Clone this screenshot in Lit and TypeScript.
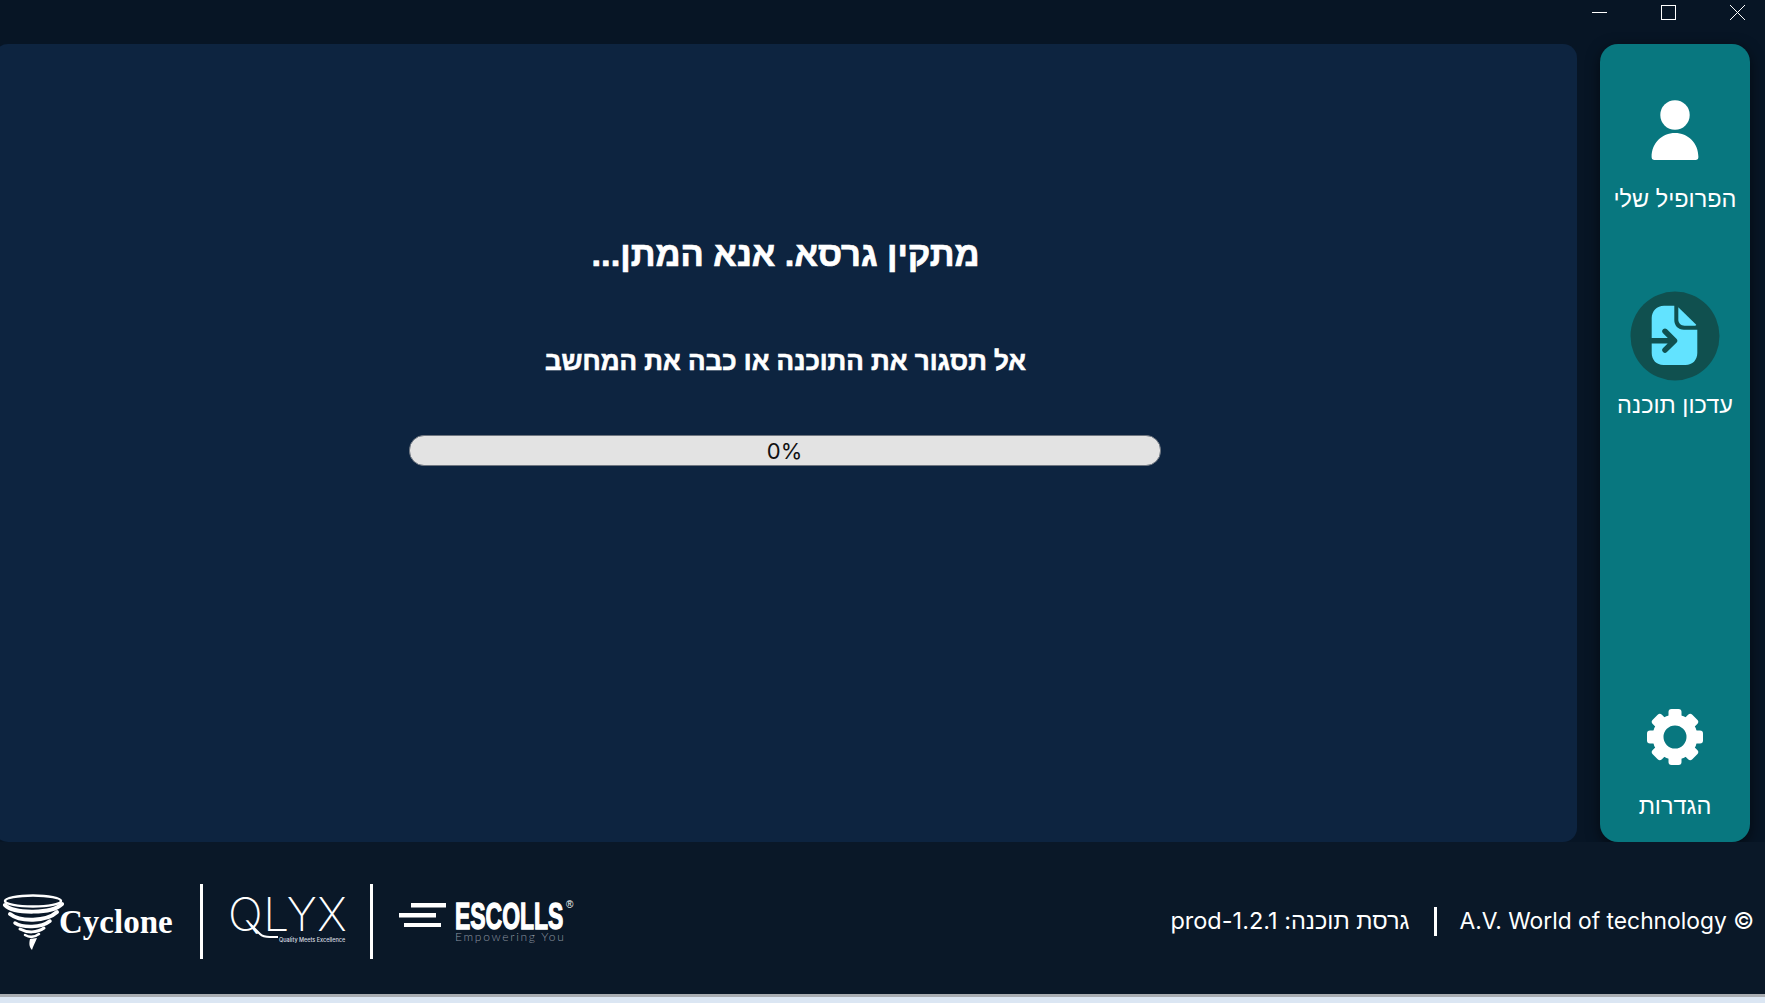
import { LitElement, html, css, svg } from 'lit';
import { customElement } from 'lit/decorators.js';

const gearTeeth = [0, 45, 90, 135, 180, 225, 270, 315];

@customElement('app-root')
export class AppRoot extends LitElement {
  static styles = css`
    :host {
      display: block;
      width: 100%;
      height: 1003px;
      overflow: hidden;
      background: #071525;
      color: #fff;
      font-family: Inter, "Liberation Sans", "DejaVu Sans", sans-serif;
    }

    .shell {
      display: flex;
      flex-direction: column;
      height: 1003px;
    }

    .titlebar {
      height: 44px;
      flex: none;
      display: flex;
      justify-content: flex-end;
      align-items: flex-start;
      gap: 54px;
      padding: 5px 20px 0 0;
      box-sizing: border-box;
    }

    .titlebar svg {
      display: block;
    }

    .body {
      flex: none;
      height: 798px;
      display: flex;
      gap: 23px;
      margin-left: -6px;
      padding-right: 15px;
    }

    .panel {
      flex: 1;
      background: #0d2440;
      border-radius: 14px;
      display: flex;
      flex-direction: column;
      align-items: center;
      padding-top: 189px;
      box-sizing: border-box;
    }

    .panel h1 {
      margin: 0;
      font: 700 34.500px/42px "Liberation Sans", sans-serif;
      -webkit-text-stroke: 0.7px #fff;
    }

    .panel h2 {
      margin: 69px 0 0;
      font: 700 26px/34px "Liberation Sans", sans-serif;
      -webkit-text-stroke: 0.6px #fff;
    }

    .bar {
      margin: 57px 2px 0 0;
      width: 752px;
      height: 31px;
      box-sizing: border-box;
      border: 1px solid #6f7680;
      border-radius: 15px;
      background: #e3e3e3;
      color: #111;
      text-align: center;
      font: 400 22px/30px Inter, "Liberation Sans", sans-serif;
    }

    .sidebar {
      flex: none;
      width: 150px;
      background: #08777f;
      border-radius: 18px;
      box-shadow: 0 4px 14px rgba(0, 0, 0, 0.55);
      display: flex;
      flex-direction: column;
      align-items: center;
      box-sizing: border-box;
      padding: 56px 0 21px;
    }

    .item {
      display: flex;
      flex-direction: column;
      align-items: center;
      font: 400 23.500px/30px "Liberation Sans", sans-serif;
    }

    .item svg {
      display: block;
    }

    .item.profile span {
      margin-top: 24px;
    }

    .item.update {
      margin-top: 77px;
    }

    .item.update span {
      margin-top: 9px;
    }

    .item.settings {
      margin-top: auto;
    }

    .item.settings span {
      margin-top: 26px;
    }

    .footer {
      flex: none;
      height: 152px;
      background: #0a1828;
      display: flex;
      align-items: flex-start;
      justify-content: space-between;
      padding: 42px 11px 0 2px;
      box-sizing: border-box;
    }

    .logos {
      display: flex;
      align-items: flex-start;
    }

    .divider {
      width: 3px;
      height: 75px;
      background: #fff;
    }

    .cyclone {
      display: flex;
      align-items: flex-start;
      width: 198px;
      padding-top: 9px;
      box-sizing: border-box;
    }

    .cyclone span {
      font: 700 33px/48px "Liberation Serif", serif;
      margin-top: 5px;
      margin-left: -5px;
    }

    .qlyx {
      position: relative;
      width: 167px;
      padding: 8px 0 0 25px;
      box-sizing: border-box;
      display: flex;
      flex-direction: column;
    }

    .qlyx b {
      font: 200 46px/44px Inter, sans-serif;
      letter-spacing: 0.5px;
    }

    .qlyx small {
      font: 500 5.500px/8px Inter, sans-serif;
      color: #d8dde2;
      margin: 0 0 0 51px;
      white-space: nowrap;
    }

    .qlyx svg {
      position: absolute;
      left: 45px;
      top: 38px;
    }

    .escolls {
      display: flex;
      align-items: flex-start;
      padding: 19px 0 0 26px;
    }

    .escolls svg {
      display: block;
      margin-right: 9px;
    }

    .escolls .words {
      display: flex;
      flex-direction: column;
      margin-top: -5px;
    }

    .escolls .name {
      display: flex;
      align-items: flex-start;
      height: 32px;
    }

    .escolls b {
      display: block;
      width: 110px;
      font: 700 37px/38px "Liberation Sans", sans-serif;
      -webkit-text-stroke: 1.4px #fff;
      white-space: nowrap;
      transform: scaleX(0.62);
      transform-origin: left top;
    }

    .escolls sup {
      font: 400 10px/10px "Liberation Sans", sans-serif;
      margin: 2px 0 0 1px;
    }

    .escolls small {
      font: 300 12px/14px Lato, sans-serif;
      letter-spacing: 1.700px;
      color: #8d96a0;
      white-space: nowrap;
    }

    .meta {
      display: flex;
      align-items: center;
      padding-top: 22px;
      font: 400 22.800px/30px Inter, "Liberation Sans", sans-serif;
    }

    .meta .version {
      font-size: 23.500px;
    }

    .meta .sep {
      width: 3px;
      height: 29px;
      background: #fff;
      margin: 0 22px 0 25px;
    }

    .strip {
      flex: none;
      height: 9px;
      box-sizing: border-box;
      border-top: 3px solid #a9adb2;
      background: #dbe6f3;
    }
  `;

  render() {
    return html`
      <div class="shell">
        <div class="titlebar">
          <svg width="15" height="15" viewBox="0 0 15 15"><path d="M0 7.5H15" stroke="#fff" fill="none"/></svg>
          <svg width="15" height="15" viewBox="0 0 15 15"><rect x=".5" y=".5" width="14" height="14" stroke="#fff" fill="none"/></svg>
          <svg width="15" height="15" viewBox="0 0 15 15"><path d="M0 0L15 15M15 0L0 15" stroke="#fff" fill="none"/></svg>
        </div>

        <div class="body">
          <main class="panel" dir="rtl">
            <h1>מתקין גרסא. אנא המתן...</h1>
            <h2>אל תסגור את התוכנה או כבה את המחשב</h2>
            <div class="bar">0%</div>
          </main>

          <aside class="sidebar" dir="rtl">
            <div class="item profile">
              <svg width="48" height="60" viewBox="0 0 48 60" fill="#fff">
                <circle cx="24" cy="15" r="14.7"/>
                <path d="M.6 57C.6 43 11 33 24 33s23.400 10 23.400 24c0 2-1 3-3 3H3.600c-2 0-3-1-3-3z"/>
              </svg>
              <span>הפרופיל שלי</span>
            </div>
            <div class="item update">
              <svg width="90" height="90" viewBox="0 0 90 90">
                <circle cx="45" cy="45" r="44.500" fill="#10504f"/>
                <path d="M34 14.700H44.300V29C44.300 34.500 48 38.700 54 38.700H67.300V62C67.300 69 62.500 74 55.500 74H33.500C26.500 74 21.700 69 21.700 62V27C21.700 20 27 14.700 34 14.700Z" fill="#62e3ff"/>
                <path d="M48.300 16.300L66 33.500C66.500 34.200 66 34.700 65 34.700H54.500C51 34.700 48.300 32 48.300 28.500Z" fill="#62e3ff"/>
                <path d="M21.700 49.700H44M35 40.300L44.500 49.700L35 59" fill="none" stroke="#10504f" stroke-width="5.500" stroke-linecap="round" stroke-linejoin="round"/>
              </svg>
              <span>עדכון תוכנה</span>
            </div>
            <div class="item settings">
              <svg width="56" height="56" viewBox="-28 -28 56 56" fill="#fff">
                <circle r="17" fill="none" stroke="#fff" stroke-width="11"/>
                ${gearTeeth.map((a) => svg`<rect x="-6.500" y="-28" width="13" height="12" rx="3" transform="rotate(${a})"/>`)}
              </svg>
              <span>הגדרות</span>
            </div>
          </aside>
        </div>

        <footer class="footer">
          <div class="logos">
            <div class="cyclone">
              <svg width="62" height="58" viewBox="0 0 62 58" fill="none" stroke="#fff" stroke-linecap="round">
                <ellipse cx="31" cy="8" rx="28" ry="5.500" stroke-width="2.500"/>
                <path d="M3 12C12 21 50 21 60 11" stroke-width="4"/>
                <path d="M8 21C18 29 44 29 55 19" stroke-width="4"/>
                <path d="M13 30C21 35 39 35 48 28" stroke-width="3.500"/>
                <path d="M18 36C25 40 35 40 42 35" stroke-width="3"/>
                <path d="M23 42C28 45 33 44 37 41" stroke-width="2.500"/>
                <path d="M35 45C33 50 31 53 30 57C27 54 27 50 28 46Z" fill="#fff" stroke="none"/>
              </svg>
              <span>Cyclone</span>
            </div>
            <div class="divider"></div>
            <div class="qlyx">
              <b>QLYX</b>
              <small>Quality Meets Excellence</small>
              <svg width="32" height="18" viewBox="0 0 32 18" fill="none" stroke="#fff" stroke-width="2">
                <path d="M2 2L12 12C15 15 18 15 22 15H30"/>
              </svg>
            </div>
            <div class="divider"></div>
            <div class="escolls">
              <svg width="47" height="24" viewBox="0 0 47 24" fill="#fff">
                <rect x="12" y="0" width="35" height="4.500"/>
                <rect x="0" y="10" width="37" height="4.500"/>
                <rect x="5" y="20" width="37" height="4.500"/>
              </svg>
              <div class="words">
                <div class="name"><b>ESCOLLS</b><sup>®</sup></div>
                <small>Empowering You</small>
              </div>
            </div>
          </div>
          <div class="meta">
            <span class="version" dir="rtl">גרסת תוכנה: prod-1.2.1</span>
            <div class="sep"></div>
            <span>A.V. World of technology ©</span>
          </div>
        </footer>
        <div class="strip"></div>
      </div>
    `;
  }
}
